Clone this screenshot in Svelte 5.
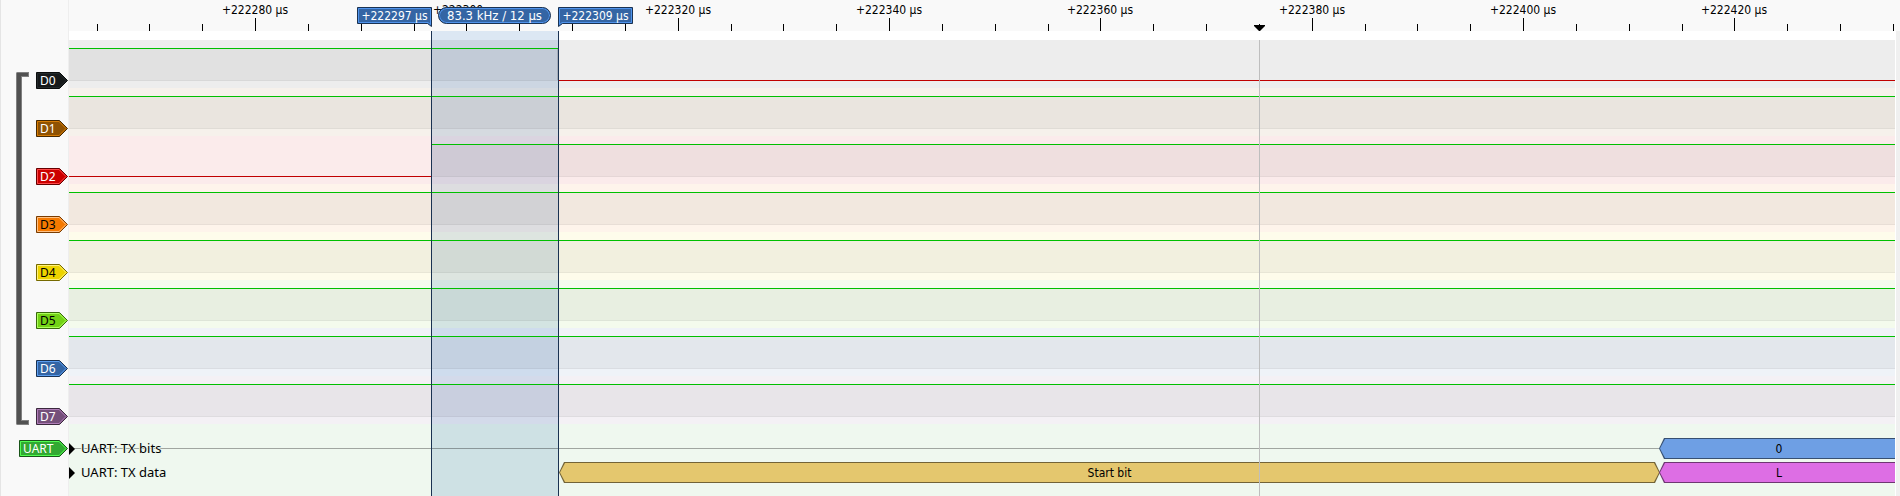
<script>
  const PX_PER_US = 10.567;
  const START = 262.34;
  const END = 640;

  const x = (t) => Math.floor((t - START) * PX_PER_US);

  const ticks = [];
  for (let t = 265; t < 440; t += 5) ticks.push({ t, major: t % 20 === 0 });

  const cursorA = 296.65;
  const cursorB = 308.68;
  const marker = 375;
  const bitStart = 412.86;

  const HIGH = true;
  const LOW = false;

  const channels = [
    { name: 'D0', rgb: '22 25 26', dark: '#0b0d0d', light: '#23292b', text: '#fff', trace: [[HIGH, cursorB], [LOW, END]] },
    { name: 'D1', rgb: '143 82 2', dark: '#472901', light: '#d67b03', text: '#fff', trace: [[HIGH, END]] },
    { name: 'D2', rgb: '204 0 0', dark: '#660000', light: '#ff4a4a', text: '#fff', trace: [[LOW, cursorA], [HIGH, END]] },
    { name: 'D3', rgb: '245 121 0', dark: '#7a3c00', light: '#ffc084', text: '#000', trace: [[HIGH, END]] },
    { name: 'D4', rgb: '237 212 0', dark: '#766a00', light: '#fff07a', text: '#000', trace: [[HIGH, END]] },
    { name: 'D5', rgb: '115 210 22', dark: '#39690b', light: '#adff5c', text: '#000', trace: [[HIGH, END]] },
    { name: 'D6', rgb: '52 101 164', dark: '#1a3252', light: '#5a9df0', text: '#fff', trace: [[HIGH, END]] },
    { name: 'D7', rgb: '117 80 123', dark: '#3a283d', light: '#b07db8', text: '#fff', trace: [[HIGH, END]] }
  ];

  const segments = (trace) =>
    trace.map(([high, end], i) => ({
      high,
      edge: high && i < trace.length - 1,
      width: x(end) - (i ? x(trace[i - 1][1]) : 0)
    }));
</script>

{#snippet tag(name, width, fill, dark, light, color)}
  <button class="tag" style="width: {width}px; color: {color}">
    <svg {width} height="17" viewBox="0 0 {width} 17" aria-hidden="true">
      <path d="M.5 .5H{width - 8.5}L{width - 0.5} 8.5L{width - 8.5} 16.5H.5Z" fill={fill} stroke={dark} />
      <path d="M1.5 1.5H{width - 9}L{width - 2} 8.5L{width - 9} 15.5H1.5Z" fill="none" stroke={light} />
    </svg>
    <span>{name}</span>
  </button>
{/snippet}

<main class="view">
  <aside class="gutter">
    <div class="group">
      <div class="bracket"></div>
      <div class="tags">
        {#each channels as c}
          {@render tag(c.name, 32, `rgb(${c.rgb})`, c.dark, c.light, c.text)}
        {/each}
      </div>
    </div>
    <div class="decoder-tag">
      {@render tag('UART', 49, '#32a932', '#195419', '#50ff50', '#fff')}
    </div>
  </aside>

  <div class="scope">
    <header class="ruler">
      {#each ticks as { t, major }}
        <div class="tick" class:major style="left: {x(t)}px"></div>
        {#if major}
          <span class="time" style="left: {x(t)}px">+222{t} µs</span>
        {/if}
      {/each}
      <svg class="hover" style="left: {x(marker)}px" width="11" height="6" viewBox="0 0 11 6" aria-hidden="true">
        <path d="M0 0H11V1L6 6H5L0 1Z" />
      </svg>
      <div class="flag left" style="left: {x(cursorA)}px">
        <svg width="75" height="20" viewBox="0 0 75 20" aria-hidden="true">
          <path d="M.5 .5H74.5V19.5L70.5 16.5H.5Z" fill="#3465a4" stroke="#1a3252" />
          <path d="M1.5 1.5H73.5V17.5L71 15.5H1.5Z" fill="none" stroke="#4f93ec" />
        </svg>
        <span>+222297 µs</span>
      </div>
      <div class="flag" style="left: {x(cursorB)}px">
        <svg width="75" height="20" viewBox="0 0 75 20" aria-hidden="true">
          <path d="M.5 .5H74.5V16.5H4.5L.5 19.5Z" fill="#3465a4" stroke="#1a3252" />
          <path d="M1.5 1.5H73.5V15.5H4L1.5 17.5Z" fill="none" stroke="#4f93ec" />
        </svg>
        <span>+222309 µs</span>
      </div>
      <div class="span-slot" style="left: {x(cursorA)}px; width: {x(cursorB) - x(cursorA)}px">
        <span class="pill">83.3 kHz / 12 µs</span>
      </div>
    </header>

    <section class="plot">
      <div class="range" style="left: {x(cursorA)}px; width: {x(cursorB) - x(cursorA)}px"></div>
      <div class="rows">
        {#each channels as c}
          <div class="channel" style="background: rgb({c.rgb} / 0.08)">
            {#each segments(c.trace) as s}
              <div class="seg" class:high={s.high} class:edge={s.edge} style="width: {s.width}px"></div>
            {/each}
          </div>
        {/each}
        <div class="decoder">
          <div class="lane">
            <div class="title"><i></i><span>UART: TX bits</span></div>
            <div class="idle" style="width: {x(bitStart)}px"></div>
            <div class="ann open blue"><span>0</span></div>
          </div>
          <div class="lane">
            <div class="title"><i></i><span>UART: TX data</span></div>
            <div class="space" style="width: {x(cursorB) + 1}px"></div>
            <div class="ann gold" style="width: {x(bitStart) - x(cursorB)}px"><span>Start bit</span></div>
            <div class="ann open pink next"><span>L</span></div>
          </div>
        </div>
      </div>
      <div class="marker" style="left: {x(marker)}px"></div>
      <div class="cursor" style="left: {x(cursorA)}px"></div>
      <div class="cursor" style="left: {x(cursorB)}px"></div>
    </section>
  </div>
</main>

<style>
  :global(body) {
    margin: 0;
    background: #f9f9f9;
  }

  .view {
    display: flex;
    min-height: 100vh;
    box-sizing: border-box;
    border-left: 1px solid #e5e5e5;
    background: #f9f9f9;
    color: #000;
    font: 12px/16px 'DejaVu Sans Condensed', 'Noto Sans', sans-serif;
    white-space: nowrap;
  }

  .gutter {
    flex: none;
    box-sizing: border-box;
    width: 68px;
    padding-top: 72px;
    border-right: 1px solid #eeeeee;
  }

  .group {
    display: flex;
    justify-content: space-between;
    padding-left: 15px;
  }

  .bracket {
    position: relative;
    box-sizing: border-box;
    width: 13px;
    border: 5px solid #808080;
    border-right: 0;
    border-left-width: 6px;
    border-radius: 2px 0 0 2px;
  }

  .bracket::before {
    content: '';
    position: absolute;
    inset: -4px 1px -4px -5px;
    border: 3px solid #515151;
    border-right: 0;
    border-left-width: 4px;
  }

  .tags {
    display: flex;
    flex-direction: column;
    gap: 31px;
  }

  .decoder-tag {
    display: flex;
    justify-content: flex-end;
    padding-top: 15px;
  }

  .tag {
    position: relative;
    display: block;
    height: 17px;
    padding: 0 0 0 4px;
    border: 0;
    background: none;
    font: 12px/18px 'Noto Sans', sans-serif;
    text-align: left;
  }

  .tag svg,
  .flag svg {
    position: absolute;
    top: 0;
    left: 0;
  }

  .tag span,
  .flag span {
    position: relative;
  }

  .scope {
    flex: 1;
    min-width: 0;
    display: flex;
    flex-direction: column;
    overflow: hidden;
  }

  .ruler {
    position: relative;
    height: 31px;
  }

  .tick {
    position: absolute;
    bottom: 0;
    width: 1px;
    height: 7px;
    background: #000;
  }

  .tick.major {
    height: 13px;
  }

  .time {
    position: absolute;
    top: 2px;
    width: 80px;
    margin-left: -40px;
    text-align: center;
  }

  .hover {
    position: absolute;
    bottom: 0;
    margin-left: -5px;
  }

  .flag {
    position: absolute;
    top: 7px;
    width: 75px;
    color: #fff;
    line-height: 18px;
    text-align: center;
  }

  .flag.left {
    margin-left: -74px;
  }

  .span-slot {
    position: absolute;
    top: 7px;
    display: flex;
    justify-content: center;
  }

  .pill {
    box-sizing: border-box;
    height: 17px;
    padding: 0 8px;
    border: 1px solid #1a3252;
    border-radius: 9px;
    background: #3465a4;
    box-shadow: inset 0 0 0 1px #4f93ec;
    color: #fff;
    font-size: 13px;
  }

  .plot {
    position: relative;
    flex: 1;
    box-sizing: border-box;
    margin-right: 4px;
    padding: 9px 1px 0 0;
    background: #fff;
    box-shadow: 4px 0 #f0f0f0;
  }

  .range {
    position: absolute;
    top: 0;
    bottom: 0;
    background: #dce7f3;
  }

  .rows {
    position: relative;
    display: flex;
    flex-direction: column;
    height: 100%;
    overflow: hidden;
  }

  .channel {
    display: flex;
    flex: none;
    height: 48px;
  }

  .seg {
    flex: none;
    box-sizing: border-box;
    height: 33px;
    margin-top: 8px;
    border-bottom: 1px solid #c00000;
  }

  .seg.high {
    border-top: 1px solid #00c000;
    border-bottom-color: rgb(0 0 0 / 0.04);
    background: rgb(0 0 0 / 0.047);
  }

  .seg.edge {
    box-shadow: inset -1px 0 rgb(0 0 0 / 0.15);
  }

  .decoder {
    display: flex;
    flex: 1;
    flex-direction: column;
    gap: 3px;
    padding: 14px 0 12px;
    background: rgb(46 160 46 / 0.08);
  }

  .lane {
    position: relative;
    display: flex;
    height: 21px;
  }

  .title {
    position: absolute;
    z-index: 1;
    top: 0;
    left: 0;
    display: flex;
    align-items: center;
    gap: 6px;
    height: 21px;
    font: 13px/21px 'Noto Sans', sans-serif;
    text-shadow: 1px 0 #eef7ee, -1px 0 #eef7ee, 0 1px #eef7ee, 0 -1px #eef7ee;
  }

  .title i {
    border: 6px solid transparent;
    border-left-color: #000;
    border-right: 0;
  }

  .idle,
  .space {
    flex: none;
  }

  .idle {
    height: 1px;
    margin-top: 10px;
    background: rgb(0 0 0 / 0.33);
  }

  .ann {
    position: relative;
    flex: none;
    display: flex;
    align-items: center;
    justify-content: center;
    background: var(--edge);
    clip-path: polygon(0 50%, 5px 0, calc(100% - 5px) 0, 100% 50%, calc(100% - 5px) 100%, 5px 100%);
  }

  .ann::before {
    content: '';
    position: absolute;
    inset: 1px;
    background: var(--fill);
    clip-path: polygon(0 50%, 5px 0, calc(100% - 5px) 0, 100% 50%, calc(100% - 5px) 100%, 5px 100%);
  }

  .ann.open {
    flex: 1;
    padding-left: 4px;
    clip-path: polygon(0 50%, 5px 0, 100% 0, 100% 100%, 5px 100%);
  }

  .ann.open::before {
    right: 0;
    clip-path: polygon(0 50%, 5px 0, 100% 0, 100% 100%, 5px 100%);
  }

  .ann.next {
    margin-left: -1px;
  }

  .ann span {
    position: relative;
  }

  .blue {
    --fill: #6e9fe4;
    --edge: #375072;
  }

  .gold {
    --fill: #e4c76e;
    --edge: #726337;
  }

  .pink {
    --fill: #dd6ee4;
    --edge: #6e3772;
  }

  .marker {
    position: absolute;
    top: 9px;
    bottom: 0;
    width: 1px;
    background: #bebebe;
  }

  .cursor {
    position: absolute;
    top: 0;
    bottom: 0;
    width: 1px;
    background: #1a3252;
  }
</style>
